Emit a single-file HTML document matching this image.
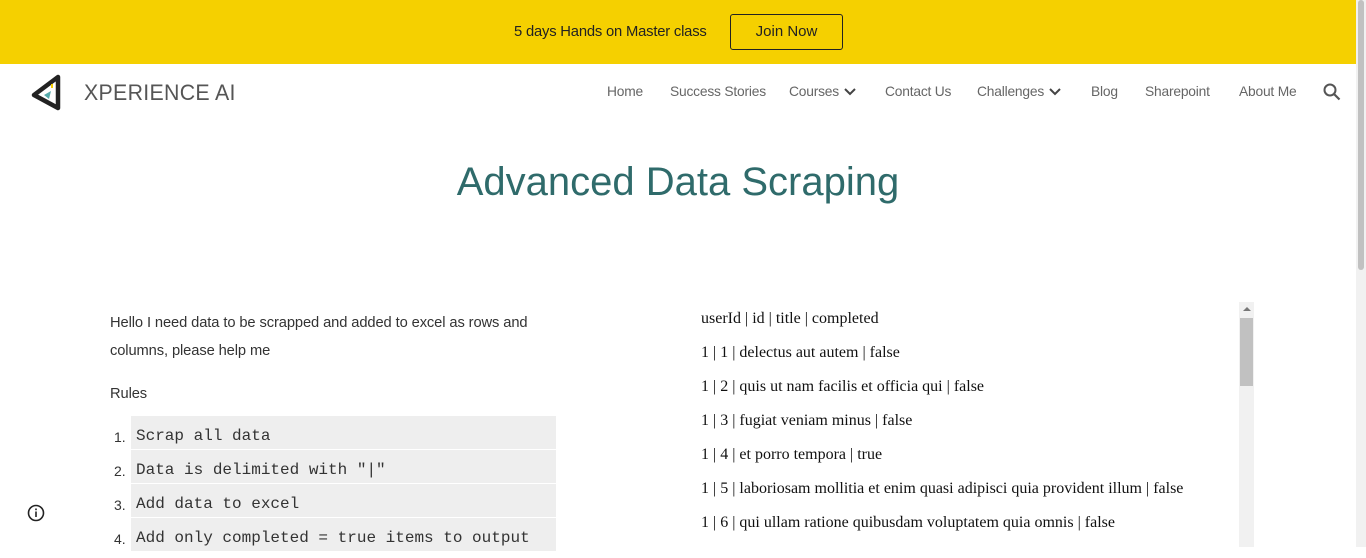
<!DOCTYPE html>
<html><head><style>
body{margin:0;width:1366px;height:547px;overflow:hidden;background:#fff;font-family:"Liberation Sans",sans-serif;position:relative}
.banner{position:absolute;left:0;top:0;width:1356px;height:64px;background:#f5d000}
.banner .t{position:absolute;left:514px;top:24px;font-size:14.8px;color:#222;letter-spacing:-0.2px}
.banner .b{position:absolute;left:730px;top:14px;width:113px;height:36px;border:1px solid #222;border-radius:3px;box-sizing:border-box;font-size:15px;color:#222;text-align:center;line-height:34px}
.nav{position:absolute;top:84px;font-size:13.8px;color:#666;letter-spacing:-0.2px}
.nav svg{vertical-align:middle;margin-left:4px}
.logo{position:absolute;left:84px;top:80px;font-size:22px;color:#555;letter-spacing:0.3px;transform:scaleX(0.97);transform-origin:left}
h1{position:absolute;left:0;width:1356px;top:160px;margin:0;text-align:center;font-weight:normal;font-size:40px;color:#2f6b6b}
.p{position:absolute;left:110px;font-size:14.7px;color:#333;letter-spacing:-0.1px}
.li{position:absolute;left:114px;font-size:14px;color:#333}
.code{position:absolute;left:131px;width:425px;height:33px;background:#eee;font-family:"Liberation Mono",monospace;font-size:16px;color:#333;line-height:40px;padding-left:5px;box-sizing:border-box}
.r{position:absolute;left:701px;font-family:"Liberation Serif",serif;font-size:16px;color:#111}
</style></head><body>
<div class="banner"><div class="t">5 days Hands on Master class</div><div class="b">Join Now</div></div>
<div style="position:absolute;right:0;top:0;width:10px;height:547px;background:#f1f1f1"></div>
<div style="position:absolute;right:2px;top:0;width:6px;height:270px;background:#c1c1c1;border-radius:3px"></div>
<svg style="position:absolute;left:30px;top:73px" width="34" height="38" viewBox="0 0 34 38"><path d="M28 4 L4 22 L28 35 Z" fill="none" stroke="#222" stroke-width="4.5" stroke-linejoin="round"/><path d="M14 22 L21 18 L19 26Z" fill="#5aa"/><path d="M21 11 l2 0 l0 4 l-2 0Z" fill="#f5d000"/></svg>
<div class="logo">XPERIENCE AI</div>
<div class="nav" style="left:607px">Home</div>
<div class="nav" style="left:670px">Success Stories</div>
<div class="nav" style="left:789px">Courses<svg width="14" height="10" viewBox="0 0 14 10"><path d="M2 2 L7 7 L12 2" fill="none" stroke="#444" stroke-width="2"/></svg></div>
<div class="nav" style="left:885px">Contact Us</div>
<div class="nav" style="left:977px">Challenges<svg width="14" height="10" viewBox="0 0 14 10"><path d="M2 2 L7 7 L12 2" fill="none" stroke="#444" stroke-width="2"/></svg></div>
<div class="nav" style="left:1091px">Blog</div>
<div class="nav" style="left:1145px">Sharepoint</div>
<div class="nav" style="left:1239px">About Me</div>
<svg style="position:absolute;left:1323px;top:83px" width="18" height="18" viewBox="0 0 18 18"><circle cx="7" cy="7" r="5.5" fill="none" stroke="#555" stroke-width="2"/><path d="M11 11 L16.5 16.5" stroke="#555" stroke-width="2.2"/></svg>
<h1>Advanced Data Scraping</h1>
<div class="p" style="top:315px">Hello I need data to be scrapped and added to excel as rows and</div>
<div class="p" style="top:343px">columns, please help me</div>
<div class="p" style="top:386px">Rules</div>
<div class="li" style="top:429px">1.</div><div class="code" style="top:416px">Scrap all data</div>
<div class="li" style="top:463px">2.</div><div class="code" style="top:450px">Data is delimited with "|"</div>
<div class="li" style="top:497px">3.</div><div class="code" style="top:484px">Add data to excel</div>
<div class="li" style="top:531px">4.</div><div class="code" style="top:518px">Add only completed = true items to output</div>
<div class="r" style="top:310px">userId | id | title | completed</div>
<div class="r" style="top:344px">1 | 1 | delectus aut autem | false</div>
<div class="r" style="top:378px">1 | 2 | quis ut nam facilis et officia qui | false</div>
<div class="r" style="top:412px">1 | 3 | fugiat veniam minus | false</div>
<div class="r" style="top:446px">1 | 4 | et porro tempora | true</div>
<div class="r" style="top:480px">1 | 5 | laboriosam mollitia et enim quasi adipisci quia provident illum | false</div>
<div class="r" style="top:514px">1 | 6 | qui ullam ratione quibusdam voluptatem quia omnis | false</div>
<div style="position:absolute;left:1239px;top:302px;width:15px;height:245px;background:#f1f1f1"></div>
<div style="position:absolute;left:1243px;top:307px;border:4px solid transparent;border-bottom:4px solid #777;border-top:0;width:0"></div>
<div style="position:absolute;left:1240px;top:318px;width:13px;height:68px;background:#c1c1c1"></div>
<svg style="position:absolute;left:27px;top:504px" width="18" height="18" viewBox="0 0 18 18"><circle cx="9" cy="9" r="7.5" fill="none" stroke="#222" stroke-width="1.6"/><rect x="8.2" y="7.5" width="1.6" height="5.5" fill="#222"/><rect x="8.2" y="4.5" width="1.6" height="1.7" fill="#222"/></svg>
</body></html>
